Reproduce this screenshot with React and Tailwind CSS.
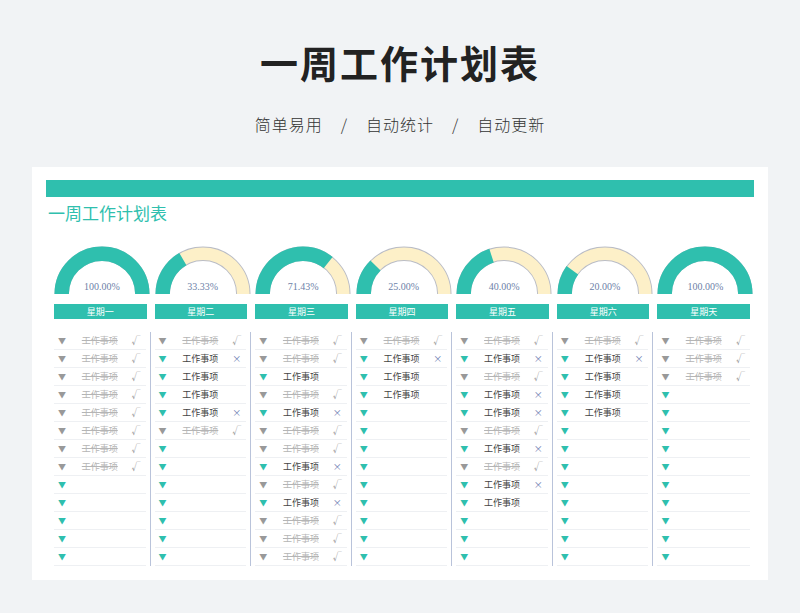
import React from 'react';

const D = 'd', O = 'o', T = 't', E = 'e';
const days = [
  { name: '星期一', pct: 1, label: '100.00%', rows: [D, D, D, D, D, D, D, D, E, E, E, E, E] },
  { name: '星期二', pct: 1 / 3, label: '33.33%', rows: [D, O, T, T, O, D, E, E, E, E, E, E, E] },
  { name: '星期三', pct: 5 / 7, label: '71.43%', rows: [D, D, T, D, O, D, D, O, D, O, D, D, D] },
  { name: '星期四', pct: 0.25, label: '25.00%', rows: [D, O, T, T, E, E, E, E, E, E, E, E, E] },
  { name: '星期五', pct: 0.4, label: '40.00%', rows: [D, O, D, O, O, D, O, D, O, T, E, E, E] },
  { name: '星期六', pct: 0.2, label: '20.00%', rows: [D, O, T, T, T, E, E, E, E, E, E, E, E] },
  { name: '星期天', pct: 1, label: '100.00%', rows: [D, D, D, E, E, E, E, E, E, E, E, E, E] },
];

const arc = (a0, a1, r) => {
  const p = (a) => [50 - r * Math.cos(a), 50 - r * Math.sin(a)];
  const [x0, y0] = p(a0);
  const [x1, y1] = p(a1);
  return `M${x0} ${y0} A${r} ${r} 0 0 1 ${x1} ${y1}`;
};

const Gauge = ({ pct, label }) => {
  const a = Math.PI * pct;
  return (
    <div className="relative w-[96px] h-[50px] mx-auto">
      <svg width="96" height="50" viewBox="0 0 100 52">
        <path d={arc(0, Math.PI, 42)} stroke="#b9bcc6" strokeWidth="15" fill="none" />
        <path d={arc(0, Math.PI, 42)} stroke="#fdf0c8" strokeWidth="13" fill="none" />
        {pct > 0 && <path d={arc(0, a, 42)} stroke="#2fbfae" strokeWidth="15" fill="none" />}
      </svg>
      <div className="absolute bottom-[2px] left-0 right-0 text-center text-[10px] text-[#6d7fa8]" style={{ fontFamily: '"Liberation Serif", "Noto Sans CJK SC", serif' }}>{label}</div>
    </div>
  );
};

const Row = ({ s }) => (
  <div className="h-[18px] flex items-center border-b border-[#eef0f3] text-[9px] px-[4px]">
    <span className={`w-[10px] text-[8px] ${s === D ? 'text-[#999]' : 'text-[#2fbfae]'}`}>▼</span>
    <span className={`flex-1 text-center ${s === D ? 'text-[#b5b5b5] line-through' : 'text-[#444]'}`}>
      {s === E ? '' : '工作事项'}
    </span>
    <span className={`w-[10px] text-[9px] ${s === D ? 'text-[#999]' : 'text-[#6a7bb0]'}`}>
      {s === D ? '√' : s === O ? '×' : ''}
    </span>
  </div>
);

export default function App() {
  return (
    <div className="w-[800px] h-[613px] bg-[#f1f3f5] pt-[38px]" style={{ fontFamily: '"Noto Sans CJK SC", sans-serif' }}>
      <h1 className="text-center text-[38px] font-bold text-[#222] leading-[48px] tracking-[2px]">一周工作计划表</h1>
      <div className="text-center text-[16px] text-[#333] font-light mt-[26px] tracking-[1px]">
        简单易用<span className="mx-[18px]">/</span>自动统计<span className="mx-[18px]">/</span>自动更新
      </div>
      <div className="mx-[32px] mt-[31px] bg-white h-[413px] px-[14px] pt-[13px]">
        <div className="h-[17px] bg-[#2fbfae]" />
        <div className="text-[#2fbfae] text-[17px] mt-[5px] leading-[22px] pl-[2px]" style={{ fontFamily: '"Noto Sans CJK SC", serif' }}>一周工作计划表</div>
        <div className="grid grid-cols-7 mt-[22px] pl-[4px]">
          {days.map((d, i) => (
            <div key={d.name} className="px-[4px]">
              <Gauge pct={d.pct} label={d.label} />
              <div className="mt-[8px] h-[15px] bg-[#2fbfae] text-white text-[9px] text-center leading-[15px]" style={{ fontFamily: '"Noto Sans CJK SC", serif' }}>{d.name}</div>
              <div className={`mt-[13px] ${i < 6 ? 'border-r border-[#b9c3da] -mr-[4px] pr-[4px]' : ''}`} style={{ fontFamily: '"Noto Sans CJK SC", serif' }}>
                {d.rows.map((s, j) => <Row key={j} s={s} />)}
              </div>
            </div>
          ))}
        </div>
      </div>
    </div>
  );
}
